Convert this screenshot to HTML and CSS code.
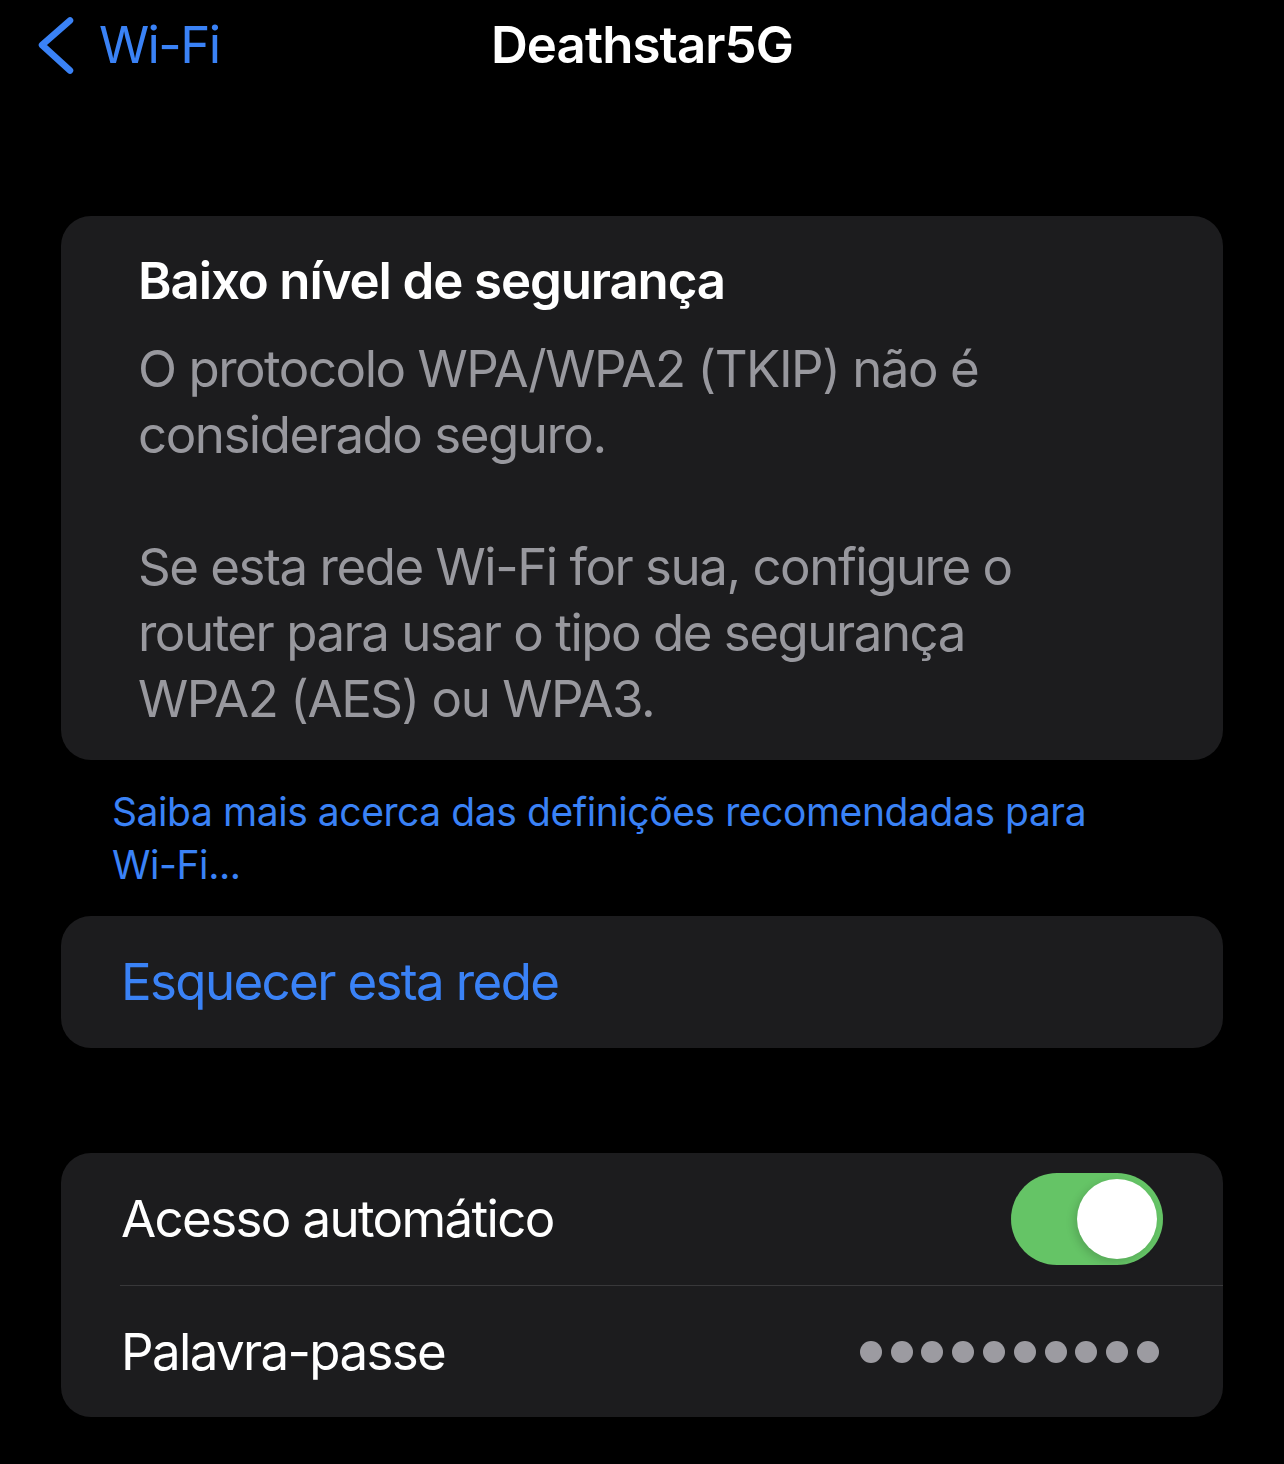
FILE: index.html
```html
<!DOCTYPE html>
<html lang="pt">
<head>
    <meta charset="UTF-8">
    <meta name="viewport" content="width=device-width, initial-scale=1.0">
    <title>Deathstar5G</title>
    <link rel="stylesheet" href="styles.css">
</head>
<body>
    <header class="nav-bar">
        <a class="back-link" href="#">
            <svg class="chevron" width="40" height="60" viewBox="0 0 40 60">
                <path d="M34 5.5 L6 30 L34 55.5" fill="none" stroke="#3a82f6" stroke-width="6.5" stroke-linecap="round" stroke-linejoin="round"/>
            </svg>
            <span>Wi-Fi</span>
        </a>
        <h1 class="nav-title">Deathstar5G</h1>
        <div></div>
    </header>

    <main class="content">
        <section class="card warning-card">
            <h2>Baixo nível de segurança</h2>
            <p>O protocolo WPA/WPA2 (TKIP) não é<br>considerado seguro.</p>
            <p>Se esta rede Wi-Fi for sua, configure o<br>router para usar o tipo de segurança<br>WPA2 (AES) ou WPA3.</p>
        </section>
        <a class="footer-link" href="#">Saiba mais acerca das definições recomendadas para<br>Wi-Fi...</a>

        <section class="card">
            <div class="row">
                <a class="action" href="#">Esquecer esta rede</a>
            </div>
        </section>

        <section class="card settings-card">
            <div class="row">
                <span class="row-label">Acesso automático</span>
                <div class="switch on"><div class="knob"></div></div>
            </div>
            <div class="row">
                <span class="row-label">Palavra-passe</span>
                <div class="dots">
                    <span></span><span></span><span></span><span></span><span></span>
                    <span></span><span></span><span></span><span></span><span></span>
                </div>
            </div>
        </section>
    </main>
</body>
</html>
```

FILE: styles.css
```css
body {
    margin: 0;
    padding: 0;
    background-color: #000;
    color: #fff;
    font-family: Inter, "Noto Sans", sans-serif;
    font-size: 51px;
    line-height: 66px;
    letter-spacing: -0.032em;
}
a {
    text-decoration: none;
    color: #3a82f6;
}
.nav-bar {
    height: 89px;
    display: grid;
    grid-template-columns: 1fr auto 1fr;
    align-items: center;
}
.back-link {
    display: flex;
    align-items: center;
    padding-left: 36px;
    gap: 23px;
}
.chevron {
    display: block;
}
.nav-title {
    margin: 0;
    font-size: 51px;
    font-weight: 600;
    line-height: 66px;
    letter-spacing: -0.018em;
}
.content {
    padding: 127px 61px 40px 61px;
    display: flex;
    flex-direction: column;
}
.card {
    background-color: #1c1c1e;
    border-radius: 30px;
    overflow: hidden;
}
.warning-card {
    padding: 32px 77px 28px 77px;
}
.warning-card h2 {
    margin: 0 0 22px 0;
    font-size: 51px;
    font-weight: 600;
    line-height: 66px;
    letter-spacing: -0.022em;
}
.warning-card p {
    margin: 0;
    color: #98989e;
    letter-spacing: -0.029em;
}
.warning-card p + p {
    margin-top: 66px;
}
.footer-link {
    font-size: 39px;
    line-height: 53px;
    letter-spacing: -0.011em;
    padding: 25px 51px 25px 51px;
}
.row {
    height: 132px;
    display: flex;
    align-items: center;
    justify-content: space-between;
    padding: 0 60px;
    box-sizing: border-box;
}
.settings-card {
    margin-top: 105px;
}
.settings-card .row + .row {
    border-top: 1px solid #38383a;
    margin-left: 59px;
    padding-left: 1px;
}
.switch {
    width: 152px;
    height: 92px;
    border-radius: 46px;
    background-color: #65c466;
    display: flex;
    align-items: center;
    justify-content: flex-end;
    padding: 0 6px;
    box-sizing: border-box;
}
.knob {
    width: 80px;
    height: 80px;
    border-radius: 50%;
    background-color: #fff;
    box-shadow: -3px 3px 8px rgba(0, 0, 0, 0.15);
}
.dots {
    display: flex;
    gap: 8.8px;
    margin-right: 4px;
}
.dots span {
    width: 22px;
    height: 22px;
    border-radius: 50%;
    background-color: #9c9ba1;
}
```
